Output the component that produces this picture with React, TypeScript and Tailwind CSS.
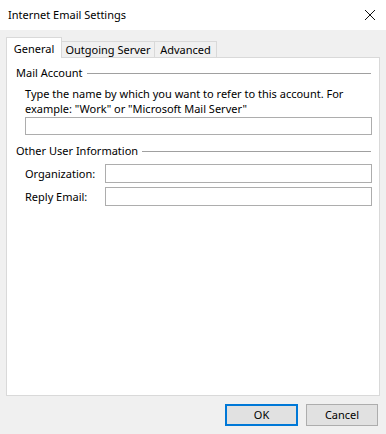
import React from "react";

const font = { fontFamily: '"Noto Sans", "Segoe UI", sans-serif' };

function GroupTitle({ text }: { text: string }) {
  return (
    <div className="flex h-4 items-center gap-[4px] pl-[9px] pr-[8px]">
      <span className="whitespace-nowrap leading-4 text-black">{text}</span>
      <div className="mt-[1px] h-px flex-1 bg-[#a0a0a0]" />
    </div>
  );
}

function Field({ label }: { label: string }) {
  return (
    <div className="flex items-center pl-[18px] pr-[7px]">
      <span className="w-[80px] whitespace-nowrap leading-4">{label}</span>
      <div className="h-[19px] flex-1 border border-[#adadad] bg-white" />
    </div>
  );
}

export default function App() {
  return (
    <div
      className="flex h-[434px] w-[386px] flex-col bg-[#f0f0f0] text-[11px] text-black"
      style={font}
    >
      {/* title bar */}
      <div className="flex h-[30px] shrink-0 items-center justify-between bg-white pl-[8px] pr-[9px]">
        <span className="whitespace-nowrap text-[11px] leading-4">Internet Email Settings</span>
        <svg width="12" height="12" viewBox="0 0 12 12" className="mr-[1px]">
          <path d="M1 1 L11 11 M11 1 L1 11" stroke="#111" strokeWidth="1" fill="none" />
        </svg>
      </div>

      {/* tabs + panel */}
      <div className="flex flex-1 flex-col px-[6px] pt-[7px]">
        <div className="relative z-10 -mb-px flex items-end">
          <div className="flex h-[21px] w-[56px] items-start justify-center whitespace-nowrap border border-b-0 border-[#d9d9d9] bg-white pt-[3px] leading-4">
            General
          </div>
          <div className="flex h-[17px] w-[93px] items-center justify-center whitespace-nowrap border border-l-0 border-[#d9d9d9] bg-[#f0f0f0] leading-4">
            Outgoing Server
          </div>
          <div className="flex h-[17px] w-[62px] items-center justify-center whitespace-nowrap border border-l-0 border-[#d9d9d9] bg-[#f0f0f0] leading-4">
            Advanced
          </div>
        </div>
        <div className="flex flex-1 flex-col border border-[#d9d9d9] bg-white pt-[7px]">
          <GroupTitle text="Mail Account" />
          <div className="mt-[5px] pl-[18px] pr-[7px]">
            <p className="whitespace-nowrap leading-[15px]">
              Type the name by which you want to refer to this account. For
              <br />
              example: "Work" or "Microsoft Mail Server"
            </p>
            <div className="mt-[1px] h-[18px] border border-[#adadad] bg-white" />
          </div>
          <div className="mt-[8px]">
            <GroupTitle text="Other User Information" />
          </div>
          <div className="mt-[5px] flex flex-col gap-[4px]">
            <Field label="Organization:" />
            <Field label="Reply Email:" />
          </div>
        </div>
      </div>

      {/* buttons */}
      <div className="flex shrink-0 justify-end gap-[8px] pb-[8px] pr-[8px] pt-[8px]">
        <button className="h-[22px] w-[73px] border-2 border-[#0078d7] bg-[#e1e1e1] leading-4">
          OK
        </button>
        <button className="h-[22px] w-[72px] border border-[#adadad] bg-[#e1e1e1] leading-4">
          Cancel
        </button>
      </div>
    </div>
  );
}
